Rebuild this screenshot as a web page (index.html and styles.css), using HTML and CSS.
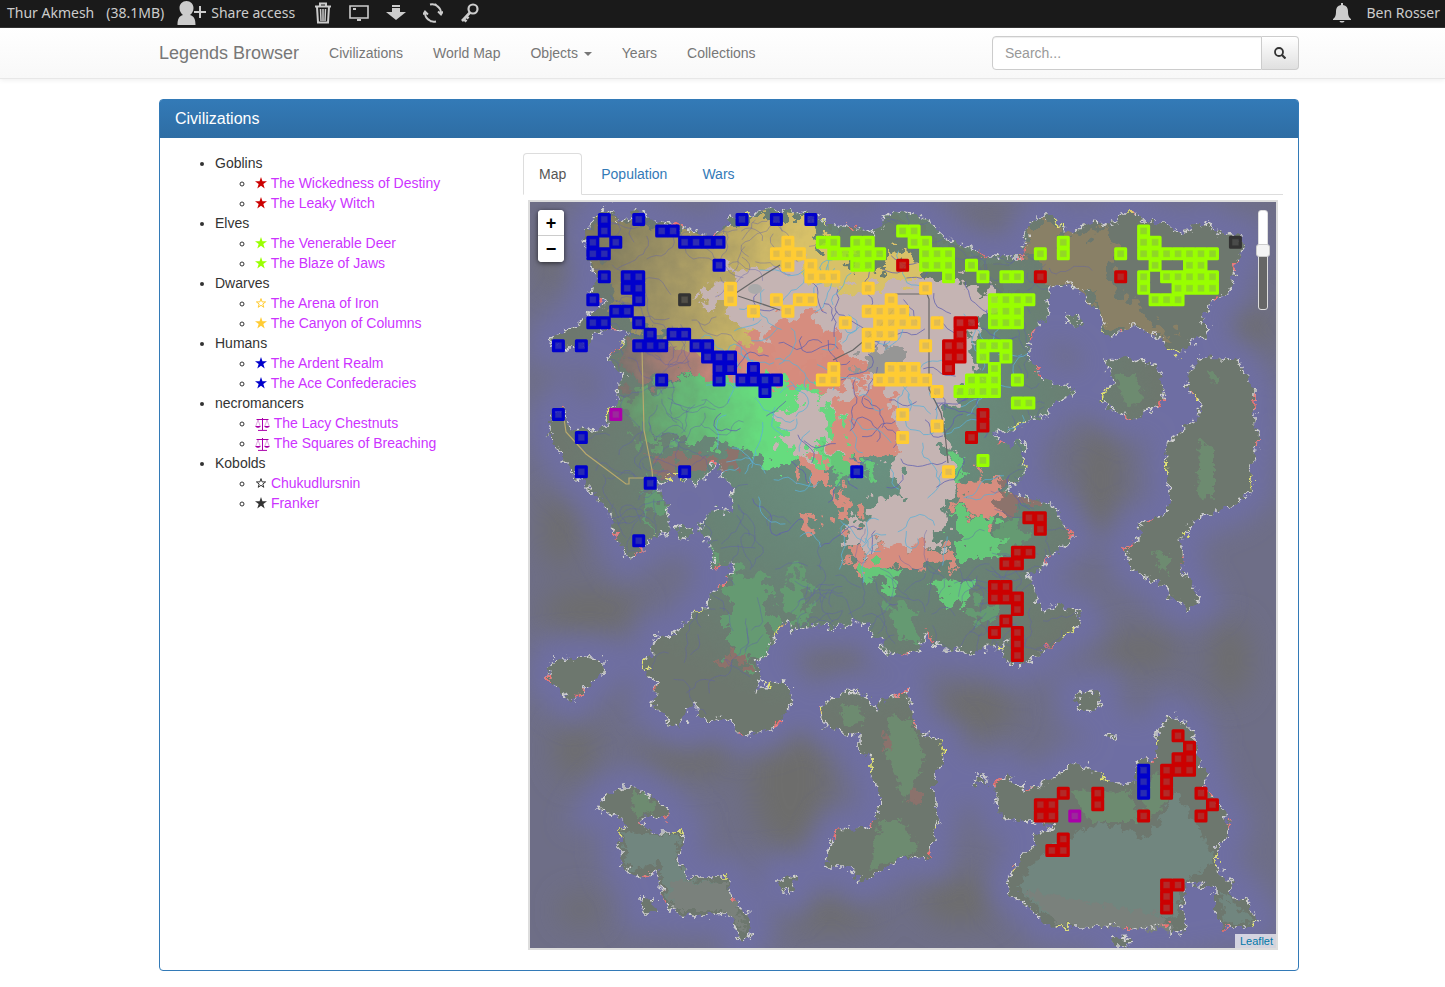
FILE: index.html
```html
<!DOCTYPE html>
<html lang="en">
<head>
<meta charset="utf-8">
<title>Legends Browser - Civilizations</title>
<link rel="stylesheet" href="styles.css">
</head>
<body>
<svg class="symbols" aria-hidden="true">
  <symbol id="star" viewBox="0 0 12 12"><path d="M6 0l1.450 4.300H12L8.350 7l1.350 4.500L6 8.800l-3.700 2.700L3.650 7 0 4.300h4.550z" fill="currentColor"/></symbol>
  <symbol id="star-open" viewBox="0 0 12 12"><path d="M6 1.600l1.100 3.300h3.500L7.800 7l1 3.300L6 8.300l-2.800 2 1-3.300-2.800-2.100h3.500z" fill="none" stroke="currentColor"/></symbol>
  <symbol id="scales" viewBox="0 0 15 13"><g fill="none" stroke="currentColor"><path d="M1.500 1.500h12M7.500 0v12M3 12.400h9"/><path d="M3 2L.8 8M3 2l2.200 6M12 2L9.800 8M12 2l2.200 6" stroke-width=".5" opacity=".7"/></g><path d="M.2 8h5.600c-.6 2.400-5 2.400-5.600 0zM9.200 8h5.600c-.6 2.400-5 2.400-5.600 0z" fill="currentColor"/></symbol>
</svg>
<div class="topbar">
  <div class="topbar-group">
    <span class="world">Thur Akmesh</span>
    <span class="size">(38.1MB)</span>
    <button class="tool share" type="button">
      <svg width="30" height="24" viewBox="0 0 30 24" aria-hidden="true"><path d="M9.500 0c4 0 7 3 7 7 0 3-1.500 5.500-3.500 7 4 1 5.500 4 5.500 10H.5c0-6 1.500-9 5.500-10-2-1.500-3.500-4-3.500-7 0-4 3-7 7-7z" fill="currentColor"/><path d="M17 11h12M23 5v12" stroke="currentColor" stroke-width="2"/></svg>
      <span>Share access</span>
    </button>
    <button class="tool" type="button" aria-label="Delete"><svg width="18" height="22" viewBox="0 0 18 22" fill="none" stroke="currentColor"><path d="M1 4.500h16M6 4V1.500h6V4" stroke-width="2"/><path d="M3 5l1 15.500h10L15 5" stroke-width="2"/><path d="M6.500 7l.5 12M9 7v12M11.500 7l-.5 12" stroke-width="1.500"/></svg></button>
    <button class="tool" type="button" aria-label="View"><svg width="20" height="18" viewBox="0 0 20 18" fill="none" stroke="currentColor"><path d="M1 2h18v12H1z" stroke-width="1.600"/><path d="M8 16h4M4 5h3" stroke-width="2"/></svg></button>
    <button class="tool" type="button" aria-label="Download"><svg width="20" height="18" viewBox="0 0 20 18" fill="currentColor"><path d="M6 1h8v2H6zM6 4h8v4h6l-10 8L0 8h6z"/></svg></button>
    <button class="tool" type="button" aria-label="Refresh"><svg width="20" height="20" viewBox="0 0 20 20" fill="none" stroke="currentColor" stroke-width="1.800"><path d="M7 1.500a9 9 0 0 1 11 9.500M15 8.500l3 3 2-3M13 18.500A9 9 0 0 1 2 9M0 11.500l2-3 3 3M5 16l3 2.500M12 1l3 3"/></svg></button>
    <button class="tool" type="button" aria-label="Key"><svg width="19" height="20" viewBox="0 0 19 20" fill="none" stroke="currentColor"><circle cx="13" cy="6" r="4.500" stroke-width="2.200"/><path d="M10 9.500L2 18M3 15.500l3.500 3M6 13l2.500 2.500" stroke-width="2.600"/></svg></button>
  </div>
  <div class="topbar-group">
    <button class="tool bell" type="button" aria-label="Notifications"><svg width="18" height="20" viewBox="0 0 18 20" fill="currentColor"><path d="M8 0h2v2c3.500.6 5 3 5 6 0 5 1 6.500 3 8v1H0v-1c2-1.500 3-3 3-8 0-3 1.500-5.400 5-6zM6.500 18h5c-.5 2-4.500 2-5 0z"/></svg></button>
    <span>Ben Rosser</span>
  </div>
</div>

<header class="navbar">
  <div class="container navbar-inner">
    <nav class="nav">
      <a class="brand" href="#">Legends Browser</a>
      <a href="#">Civilizations</a>
      <a href="#">World Map</a>
      <a href="#">Objects <span class="caret"></span></a>
      <a href="#">Years</a>
      <a href="#">Collections</a>
    </nav>
    <form class="search">
      <input type="text" placeholder="Search..." aria-label="Search">
      <button type="button" aria-label="Go"><svg width="12" height="12" viewBox="0 0 12 12" fill="none" stroke="#333"><circle cx="5" cy="5" r="4" stroke-width="1.800"/><path d="M8 8l3.500 3.500" stroke-width="2.200"/></svg></button>
    </form>
  </div>
</header>

<main class="container">
  <section class="panel">
    <h1 class="panel-heading">Civilizations</h1>
    <div class="panel-body">
      <ul class="races">
        <li>Goblins
          <ul>
            <li><svg class="mark goblin"><use href="#star"/></svg> <a href="#">The Wickedness of Destiny</a></li>
            <li><svg class="mark goblin"><use href="#star"/></svg> <a href="#">The Leaky Witch</a></li>
          </ul></li>
        <li>Elves
          <ul>
            <li><svg class="mark elf"><use href="#star"/></svg> <a href="#">The Venerable Deer</a></li>
            <li><svg class="mark elf"><use href="#star"/></svg> <a href="#">The Blaze of Jaws</a></li>
          </ul></li>
        <li>Dwarves
          <ul>
            <li><svg class="mark dwarf"><use href="#star-open"/></svg> <a href="#">The Arena of Iron</a></li>
            <li><svg class="mark dwarf"><use href="#star"/></svg> <a href="#">The Canyon of Columns</a></li>
          </ul></li>
        <li>Humans
          <ul>
            <li><svg class="mark human"><use href="#star"/></svg> <a href="#">The Ardent Realm</a></li>
            <li><svg class="mark human"><use href="#star"/></svg> <a href="#">The Ace Confederacies</a></li>
          </ul></li>
        <li>necromancers
          <ul>
            <li><svg class="mark scales"><use href="#scales"/></svg> <a href="#">The Lacy Chestnuts</a></li>
            <li><svg class="mark scales"><use href="#scales"/></svg> <a href="#">The Squares of Breaching</a></li>
          </ul></li>
        <li>Kobolds
          <ul>
            <li><svg class="mark"><use href="#star-open"/></svg> <a href="#">Chukudlursnin</a></li>
            <li><svg class="mark"><use href="#star"/></svg> <a href="#">Franker</a></li>
          </ul></li>
      </ul>

      <div class="views">
        <div class="tabs" role="tablist">
          <a class="tab active" role="tab" href="#">Map</a>
          <a class="tab" role="tab" href="#">Population</a>
          <a class="tab" role="tab" href="#">Wars</a>
        </div>
        <div class="map">
          <svg class="map-canvas" viewBox="530 202 746 746" role="img" aria-label="World map">
            <defs>
              <filter id="rough" filterUnits="userSpaceOnUse" x="530" y="202" width="746" height="746" color-interpolation-filters="sRGB">
                <feTurbulence type="fractalNoise" baseFrequency="0.14" numOctaves="4" seed="7"/>
                <feDisplacementMap in="SourceGraphic" scale="14" xChannelSelector="R" yChannelSelector="G"/>
              </filter>
              <filter id="ragged" filterUnits="userSpaceOnUse" x="530" y="202" width="746" height="746" color-interpolation-filters="sRGB">
                <feTurbulence type="fractalNoise" baseFrequency="0.07" numOctaves="4" seed="3"/>
                <feDisplacementMap in="SourceGraphic" scale="42" xChannelSelector="R" yChannelSelector="G"/>
              </filter>
              <filter id="glow" filterUnits="userSpaceOnUse" x="480" y="152" width="846" height="846"><feGaussianBlur stdDeviation="12"/></filter>
              <filter id="soft" filterUnits="userSpaceOnUse" x="500" y="172" width="806" height="806"><feGaussianBlur stdDeviation="15"/></filter>
              <g id="land">
                <path id="mainland" d="M600 212L612 208 618 222 630 220 635 210 642 214 655 222 680 226 700 235 715 236 725 228 732 215 745 217 760 211 773 209 790 213 805 212 820 215 822 224 840 224 855 228 870 232 882 226 886 215 900 211 918 214 932 222 937 230 950 240 965 246 980 252 985 258 1000 256 1022 256 1025 245 1028 226 1040 216 1052 216 1060 227 1075 234 1085 223 1100 222 1112 226 1122 212 1134 212 1142 222 1165 222 1180 234 1195 226 1207 222 1215 232 1230 234 1242 236 1244 250 1236 262 1232 280 1230 292 1220 296 1210 302 1202 320 1210 330 1205 338 1192 340 1180 355 1170 350 1162 338 1150 334 1135 324 1128 330 1118 330 1110 338 1104 330 1100 310 1088 305 1085 294 1070 284 1052 286 1048 300 1050 314 1040 322 1030 335 1028 348 1035 370 1045 382 1073 388 1072 395 1055 402 1048 415 1030 420 1012 430 992 432 1000 443 1008 446 1018 440 1025 445 1023 475 1008 488 1015 495 1052 505 1065 525 1073 538 1062 547 1048 558 1038 572 1027 575 1035 592 1042 612 1058 605 1078 612 1083 623 1065 635 1042 652 1022 665 1008 662 998 652 1005 642 975 652 955 650 938 648 927 632 918 652 898 653 883 652 882 642 868 628 857 620 842 628 815 625 792 632 788 620 778 630 775 637 765 657 755 663 762 683 755 693 770 683 785 682 793 697 783 717 772 730 742 735 725 717 708 722 698 717 697 702 685 713 682 727 668 723 665 712 652 707 657 687 642 662 652 653 657 635 672 637 688 620 692 612 708 610 712 592 732 575 735 565 712 567 713 552 698 525 715 508 732 512 733 485 723 478 718 458 708 475 695 482 678 475 658 482 660 495 667 505 670 532 652 538 638 553 627 557 613 532 612 518 592 492 575 475 562 458 550 435 550 418 562 405 568 418 570 430 605 428 608 410 617 405 618 385 625 378 607 358 618 348 630 333 608 328 592 335 582 348 550 345 552 335 572 328 588 315 608 301 588 295 597 281 590 265 585 232z"/>
                <path d="M1103 361L1125 358 1158 365 1160 381 1165 401 1148 411 1135 420 1120 414 1100 401 1113 381zM1192 368L1202 358 1238 361 1255 391 1255 420 1258 440 1250 470 1252 490 1235 505 1215 512 1195 520 1180 540 1183 570 1200 600 1188 608 1170 598 1165 585 1140 575 1130 565 1125 548 1140 540 1138 525 1165 515 1170 500 1165 455 1170 440 1195 420 1203 405 1185 385z"/>
                <path d="M1170 715L1187 723 1197 740 1197 757 1207 773 1203 787 1217 800 1230 823 1227 837 1217 847 1217 870 1233 883 1230 897 1247 900 1258 920 1247 927 1223 927 1215 910 1215 887 1187 883 1182 907 1187 933 1170 935 1170 923 1130 930 1113 925 1080 927 1060 927 1043 923 1033 910 1010 893 1008 880 1020 857 1035 847 1032 835 1053 827 1040 822 1000 818 995 785 1007 773 1023 790 1040 785 1055 778 1073 762 1093 770 1108 783 1133 783 1138 760 1157 760 1157 733z"/>
                <path d="M820 707L842 692 862 693 875 708 888 697 907 692 913 717 918 733 942 740 945 763 935 770 935 807 940 813 933 837 930 858 902 857 885 870 862 882 848 867 825 867 828 850 838 830 872 827 878 807 883 800 872 777 872 757 860 753 860 735 842 733 825 725z"/>
                <path d="M597 810L605 797 622 788 640 788 655 800 668 807 667 820 652 815 637 820 652 832 683 832 682 847 677 857 687 877 728 877 735 903 747 912 752 933 742 942 732 920 725 913 685 917 668 907 662 897 658 870 640 878 625 870 620 853 620 828 627 827 622 818 608 812z"/>
                <path d="M552 660L585 657 603 660 602 672 588 687 572 700 560 692 548 678zM675 524L695 528 688 538 678 536zM1076 693L1100 692 1102 704 1092 712 1078 710zM1106 734L1115 735 1110 742zM974 775L984 775 986 786 975 784zM641 900L654 899 655 912 643 912zM780 876L797 877 790 893 780 888zM1112 938L1130 937 1128 948 1114 948zM1067 316L1078 315 1080 325 1070 326z"/>
              </g>
              <clipPath id="shore"><use href="#mainland"/></clipPath>
              <radialGradient id="light" gradientUnits="userSpaceOnUse" cx="860" cy="420" r="300">
                <stop offset="0" stop-color="#6a9684"/><stop offset=".55" stop-color="#688476"/><stop offset="1" stop-color="#6d776e"/>
              </radialGradient>
              <linearGradient id="sand" gradientUnits="userSpaceOnUse" x1="590" y1="240" x2="790" y2="290">
                <stop offset="0" stop-color="#7d795f"/><stop offset=".45" stop-color="#a29664"/><stop offset="1" stop-color="#d8c168"/>
              </linearGradient>
              <linearGradient id="meadow" gradientUnits="userSpaceOnUse" x1="620" y1="420" x2="760" y2="400">
                <stop offset="0" stop-color="#698a6c"/><stop offset=".5" stop-color="#66b676"/><stop offset="1" stop-color="#66dc7e"/>
              </linearGradient>
              <linearGradient id="clay" gradientUnits="userSpaceOnUse" x1="620" y1="370" x2="740" y2="340">
                <stop offset="0" stop-color="#79716c"/><stop offset="1" stop-color="#d68b7d"/>
              </linearGradient>
            </defs>

            <rect x="530" y="202" width="746" height="746" fill="#6e6e87"/>
            <g filter="url(#soft)" fill="#6d6d6c">
              <ellipse cx="790" cy="780" rx="40" ry="70"/><ellipse cx="690" cy="755" rx="50" ry="20"/><ellipse cx="1100" cy="480" rx="20" ry="60"/>
              <ellipse cx="590" cy="610" rx="50" ry="22"/><ellipse cx="975" cy="710" rx="40" ry="24"/><ellipse cx="860" cy="660" rx="60" ry="12"/>
              <ellipse cx="1230" cy="660" rx="20" ry="40"/><ellipse cx="960" cy="900" rx="40" ry="24"/><ellipse cx="1000" cy="224" rx="50" ry="8"/>
              <ellipse cx="560" cy="530" rx="18" ry="40"/><ellipse cx="575" cy="750" rx="20" ry="30"/><ellipse cx="1140" cy="650" rx="40" ry="18"/>
              <ellipse cx="1250" cy="330" rx="18" ry="24"/><ellipse cx="830" cy="915" rx="50" ry="16"/><ellipse cx="555" cy="260" rx="12" ry="30"/><ellipse cx="580" cy="910" rx="20" ry="14"/>
            </g>
            <use href="#land" filter="url(#glow)" fill="#6e6ea3" stroke="#6e6ea3" stroke-width="40"/>
            <g filter="url(#rough)">
              <use href="#land" fill="url(#light)"/>
              <path fill="#71867f" d="M1045 850L1100 822 1150 838 1175 790 1200 830 1215 860 1180 885 1178 915 1100 922 1045 915 1018 885zM622 832L680 835 675 858 688 880 726 882 735 905 670 905 658 862 630 872zM1218 890l10 8 26 22-28 4z"/>
              <path fill="#7a817c" d="M1025 890L1160 915 1178 930 1060 925zM670 882l56 0 20 50-24-22-50 0z"/>
            </g>

            <g clip-path="url(#shore)">
              <g filter="url(#ragged)">
                <path fill="url(#sand)" d="M590 215L700 232 740 218 820 218 815 250 905 240 935 290 900 330 790 350 720 380 660 340 620 310 590 260z"/>
                <path fill="#898066" d="M1025 225L1060 225 1080 240 1110 222 1115 290 1160 325 1175 345 1110 330 1090 300 1045 280 1030 260z"/>
                <path fill="#6a7d6e" d="M830 228L900 215 960 255 1010 260 1010 300 940 290 900 250 880 275 830 250z"/>
                <path fill="url(#clay)" d="M622 340L660 345 720 362 800 300 900 335 870 390 740 400 690 375 625 385z"/>
                <path fill="url(#meadow)" d="M625 395L700 372 800 385 860 400 865 450 780 465 720 440 640 445z"/>
                <path fill="#c5b4b3" d="M700 300L730 270 800 262 830 290 950 275 1000 300 970 330 975 380 940 420 955 480 940 545 840 550 860 515 900 490 890 440 810 465 775 440 790 400 870 380 830 330 790 320 770 345 735 320z"/>
                <path fill="#d68d7f" d="M770 320L820 315 825 365 775 375zM850 385L890 388 900 450 845 460 830 445zM795 455l30 2 5 32-20 0zM840 480l15 30-4 20-14-10zM955 475L1000 482 1020 505 990 520 960 510zM850 552L900 545 950 548 955 570 900 562 855 572zM800 510l14 3-2 16-10-3z"/>
                <path fill="#8c736c" d="M650 455l90 0 0 12-85 6zM1000 485l40 12-5 16-30 3z"/>
                <path fill="#69d580" d="M822 400l18 6-4 30-16-6zM816 440l14 4 4 22-18-2z"/>
                <path fill="#65c879" d="M955 510L990 520 1010 560 955 560zM860 565l50 5-20 18-25-8zM930 582l45-2-5 14-25 14zM820 450l40 12 20 12-40 3zM950 455l14-2 2 22-12 0z"/>
                <path fill="#659a72" d="M730 570l40 10 0 60-20 30-20-10zM790 560l25 30-20 40-12-30zM890 600l30 10-8 34-20-12zM960 600l35 5 0 18-30-6zM1000 520l25 6-6 34-18-6zM650 480l15 20-20 30zM700 540l20 15-12 10z"/>
                <path fill="#969695" d="M865 352l38-6 0 24-50 4z"/>
                <path fill="#8d726b" d="M724 652l28-3-4 20-20-4z"/>
              </g>
              <g id="rivers" fill="none" stroke-width="1"></g>
              <g fill="none" stroke="#b9a96c" stroke-width="1.200"><path d="M642 350L644 430 652 470 653 483M564 418l2 14 20 22 40 30 3 0 0-6 20 0"/></g>
              <g fill="none" stroke="#666" stroke-width="1.200"><path d="M736 293l18-12 26-16M738 296l42 14M895 294l32 0 2 5 0 90 12 24 4 20 3 30M833 360l20-10 24-20 16-20"/></g>
              <ellipse cx="755" cy="289" rx="7" ry="5" fill="#aaa"/>
            </g>

            <g filter="url(#rough)">
              <g fill="#6d8b70">
                <path d="M1115 375l20 0 8 24-16 10zM1208 370l12 6-6 8zM1200 440l14 10 0 50-16-6zM1155 550l14 6 0 16-12-6zM840 705l20 0 5 18-20 4zM890 715l20 5 15 40-20 40-20-50zM880 820l20 0 20 30-50 20zM632 792l14 0 10 20-20 4zM1070 790l60 2 10 30-50 0zM1140 790l20-20 8 30-20 20z"/>
                <path fill="#8b726c" d="M882 732l8 8 2 12-8-4zM910 788l12 4 0 12-14-4z"/>
              </g>
              <use href="#land" class="coast foam"/>
              <use href="#land" class="coast reef"/>
              <use href="#land" class="coast beach"/>
            </g>
            <g id="sites"></g>
          </svg>
          <div class="zoom">
            <button type="button" aria-label="Zoom in">+</button>
            <button type="button" aria-label="Zoom out">−</button>
          </div>
          <div class="opacity"><span class="opacity-knob"></span></div>
          <a class="attribution" href="#">Leaflet</a>
        </div>
      </div>
    </div>
  </section>
</main>
<script src="map.js"></script>
</body>
</html>
```
FILE: styles.css
```css
* { box-sizing: border-box; }
body {
  margin: 0;
  background: #fff;
  color: #333;
  font: 14px/20px "Liberation Sans", Arial, sans-serif;
}
a { color: #337ab7; text-decoration: none; }
button { font: inherit; cursor: pointer; }
.symbols { display: none; }

.topbar {
  display: flex;
  justify-content: space-between;
  height: 28px;
  padding: 0 5px 2px 7px;
  background: #1a1a1a;
  border-bottom: 1px solid #333;
  color: #ccc;
  font: 14px/25px "Noto Sans", sans-serif;
}
.topbar-group { display: flex; align-items: center; }
.size { margin-left: 12px; }
.tool {
  display: flex;
  align-items: center;
  margin-left: 17px;
  padding: 0;
  border: 0;
  background: none;
  color: #ccc;
}
.tool svg { display: block; }
.share { gap: 4px; margin-left: 13px; }
.share + .tool { margin-left: 19px; }
.bell { margin-right: 15px; }

.container {
  width: 100%;
  max-width: 1153px;
  margin: 0 auto;
  padding-left: 13px;
}
.navbar {
  background: linear-gradient(#fff, #f8f8f8);
  border-bottom: 1px solid #e7e7e7;
  box-shadow: 0 1px 5px rgba(0, 0, 0, .075);
  margin-bottom: 20px;
}
.navbar-inner { display: flex; justify-content: space-between; align-items: center; }
.nav { display: flex; }
.nav a { padding: 15px; color: #777; text-shadow: 0 1px 0 rgba(255, 255, 255, .25); }
.nav .brand { padding-left: 0; font-size: 18px; }
.caret {
  display: inline-block;
  margin-left: 2px;
  vertical-align: middle;
  border: 4px solid transparent;
  border-top-color: #777;
  border-bottom: 0;
}
.search { display: flex; width: 307px; height: 34px; }
.search input {
  flex: 1;
  min-width: 0;
  padding: 6px 12px;
  border: 1px solid #ccc;
  border-radius: 4px 0 0 4px;
  box-shadow: inset 0 1px 1px rgba(0, 0, 0, .075);
  font: inherit;
}
.search input::placeholder { color: #999; }
.search button {
  display: grid;
  place-items: center;
  width: 37px;
  border: 1px solid #ccc;
  border-left: 0;
  border-radius: 0 4px 4px 0;
  background: linear-gradient(#fff, #e0e0e0);
}

.panel { border: 1px solid #337ab7; border-radius: 4px; margin-bottom: 16px; }
.panel-heading {
  margin: 0;
  padding: 10px 15px;
  background: linear-gradient(#337ab7, #2e6da4);
  border-radius: 2px 2px 0 0;
  color: #fff;
  font-size: 16px;
  font-weight: normal;
  line-height: 18px;
}
.panel-body { display: grid; grid-template-columns: 333fr 760fr; gap: 15px; padding: 15px; }
.races, .races ul { margin: 0; padding-left: 40px; }
.races a { color: #c3f; }
.mark { width: 12px; height: 12px; vertical-align: -1px; color: #333; }
.goblin { color: #c00; }
.elf { color: #9f0; }
.dwarf { color: #fc3; }
.human { color: #00c; }
.scales { width: 15px; height: 13px; vertical-align: -3px; color: #a0a; }

.views { min-width: 0; }
.tabs { display: flex; border-bottom: 1px solid #ddd; }
.tab {
  margin: 0 3px -1px 0;
  padding: 10px 15px;
  border: 1px solid transparent;
  border-radius: 4px 4px 0 0;
}
.tab.active { color: #555; background: #fff; border-color: #ddd #ddd #fff; }

.map { position: relative; margin: 5px; border: 2px solid #ddd; overflow: hidden; }
.map-canvas { display: block; width: 100%; }
.coast { fill: none; stroke-width: 1.5; }
.foam { stroke: #d0d0d0; stroke-dasharray: 5 4 8 7 3 5 12 6; }
.reef { stroke: #f07070; stroke-dasharray: 0 90 12 30 8 150 6 60; }
.beach { stroke: #e6e66a; stroke-dasharray: 0 170 14 80 6 110; }
.zoom {
  position: absolute;
  top: 8px;
  left: 8px;
  display: flex;
  flex-direction: column;
  width: 26px;
  border-radius: 4px;
  overflow: hidden;
  background: #fff;
  box-shadow: 0 1px 5px rgba(0, 0, 0, .65);
}
.zoom button {
  height: 26px;
  padding: 0;
  border: 0;
  background: #fff;
  color: #000;
  font: bold 18px/26px "Liberation Sans", sans-serif;
}
.zoom button:first-child { border-bottom: 1px solid #ccc; }
.opacity {
  position: absolute;
  top: 8px;
  right: 8px;
  width: 10px;
  height: 100px;
  border: 1px solid #ddd;
  border-radius: 3px;
  background: linear-gradient(#fff 40%, #666 40%);
}
.opacity-knob {
  position: absolute;
  top: 33px;
  left: -3px;
  width: 14px;
  height: 13px;
  border: 1px solid #ccc;
  border-radius: 3px;
  background: #f4f4f4;
}
.attribution {
  position: absolute;
  right: 0;
  bottom: 0;
  padding: 0 3px 0 5px;
  background: rgba(255, 255, 255, .7);
  color: #0078a8;
  font: 11px/14px "Liberation Sans", sans-serif;
}
```
FILE: map.js
```js
const SVG = "http://www.w3.org/2000/svg";
const CELL = 11.475;
const ORIGIN = { x: 558.4, y: 219.4 };

// Occupied map cells: row -> columns, per civilization colour.
const sites = {
  "#ffcc33": {
    2: [20], 3: [19, 20, 21], 4: [20, 22], 5: [22, 23, 24], 6: [15, 27, 32],
    7: [15, 19, 21, 22, 29], 8: [17, 20, 27, 28, 29, 30], 9: [25, 28, 29, 30, 31, 33],
    10: [27, 28, 29], 11: [27, 32], 13: [24, 29, 30, 31], 14: [23, 24, 28, 29, 30, 31, 32],
    15: [33], 17: [30], 18: [33], 19: [30], 22: [34]
  },
  "#99ff00": {
    1: [30, 31, 51], 2: [23, 24, 26, 27, 31, 32, 44, 51, 52],
    3: [24, 25, 26, 27, 28, 32, 33, 34, 42, 44, 49, 51, 52, 53, 54, 55, 56, 57],
    4: [26, 27, 32, 33, 34, 36, 52, 55, 56], 5: [34, 37, 39, 40, 51, 53, 54, 55, 56, 57],
    6: [51, 54, 55, 56, 57], 7: [38, 39, 40, 41, 52, 53, 54], 8: [38, 39, 40], 9: [38, 39, 40],
    11: [37, 38, 39], 12: [37, 39], 13: [38], 14: [36, 37, 38, 40], 15: [35, 36, 37, 38],
    16: [40, 41], 21: [37]
  },
  "#0000cc": {
    0: [4, 7, 16, 19, 22], 1: [4, 9, 10], 2: [3, 5, 11, 12, 13, 14], 3: [3, 4], 4: [14],
    5: [4, 6, 7], 6: [6, 7], 7: [3, 7], 8: [5, 6], 9: [3, 4, 7], 10: [8, 10, 11],
    11: [0, 2, 7, 8, 9, 12, 13], 12: [13, 14, 15], 13: [14, 15, 17], 14: [9, 14, 16, 17, 18, 19],
    15: [18], 17: [0], 19: [2], 22: [2, 11, 26], 23: [8], 28: [7], 48: [51], 49: [51], 50: [51]
  },
  "#cc0000": {
    4: [30], 5: [42, 49], 9: [35, 36], 10: [35], 11: [34, 35], 12: [34, 35], 13: [34],
    17: [37], 18: [37], 19: [36], 26: [41, 42], 27: [42], 29: [40, 41], 30: [39, 40],
    32: [38, 39], 33: [38, 39, 40], 34: [40], 35: [39], 36: [38, 40], 37: [40], 38: [40],
    45: [54], 46: [55], 47: [54, 55], 48: [53, 54, 55], 49: [53], 50: [44, 47, 53, 56],
    51: [42, 43, 47, 57], 52: [42, 43, 51, 56], 54: [44], 55: [43, 44], 58: [53, 54], 59: [53], 60: [53]
  },
  "#aa00aa": { 17: [5], 52: [45] },
  "#333333": { 2: [59], 7: [11] }
};

function add(parent, name, attributes) {
  const node = document.createElementNS(SVG, name);
  for (const key in attributes) node.setAttribute(key, attributes[key]);
  parent.appendChild(node);
}

const siteLayer = document.getElementById("sites");
for (const color in sites) {
  for (const row in sites[color]) {
    for (const col of sites[color][row]) {
      const x = ORIGIN.x + col * CELL;
      const y = ORIGIN.y + row * CELL;
      add(siteLayer, "rect", { x: x - 5, y: y - 5, width: 10, height: 10, fill: color, "fill-opacity": 0.85, stroke: color, "stroke-width": 3, "stroke-linejoin": "round" });
      add(siteLayer, "rect", { x: x - 3, y: y - 3, width: 6, height: 6, fill: "#888", "fill-opacity": 0.2 });
    }
  }
}

// Rivers: seeded random walks, so the map is the same on every load.
let seed = 42;
function random() {
  seed = (seed * 16807) % 2147483647;
  return seed / 2147483647;
}
const riverLayer = document.getElementById("rivers");
for (let i = 0; i < 400; i++) {
  let x = 600 + random() * 450;
  let y = 215 + random() * 470;
  const inner = Math.hypot(x - 870, y - 400) < 160;
  let angle = Math.floor(random() * 8) * Math.PI / 4;
  let d = `M${x.toFixed(1)} ${y.toFixed(1)}`;
  const steps = 4 + random() * 7;
  for (let s = 0; s < steps; s++) {
    angle += (random() - 0.5) * 1.7;
    x += Math.cos(angle) * 5;
    y += Math.sin(angle) * 5;
    d += `L${x.toFixed(1)} ${y.toFixed(1)}`;
  }
  add(riverLayer, "path", { d, stroke: inner && random() < 0.6 ? "#5ab0d8" : "#5f5fb0", opacity: inner ? 0.75 : 0.4 });
}
```
